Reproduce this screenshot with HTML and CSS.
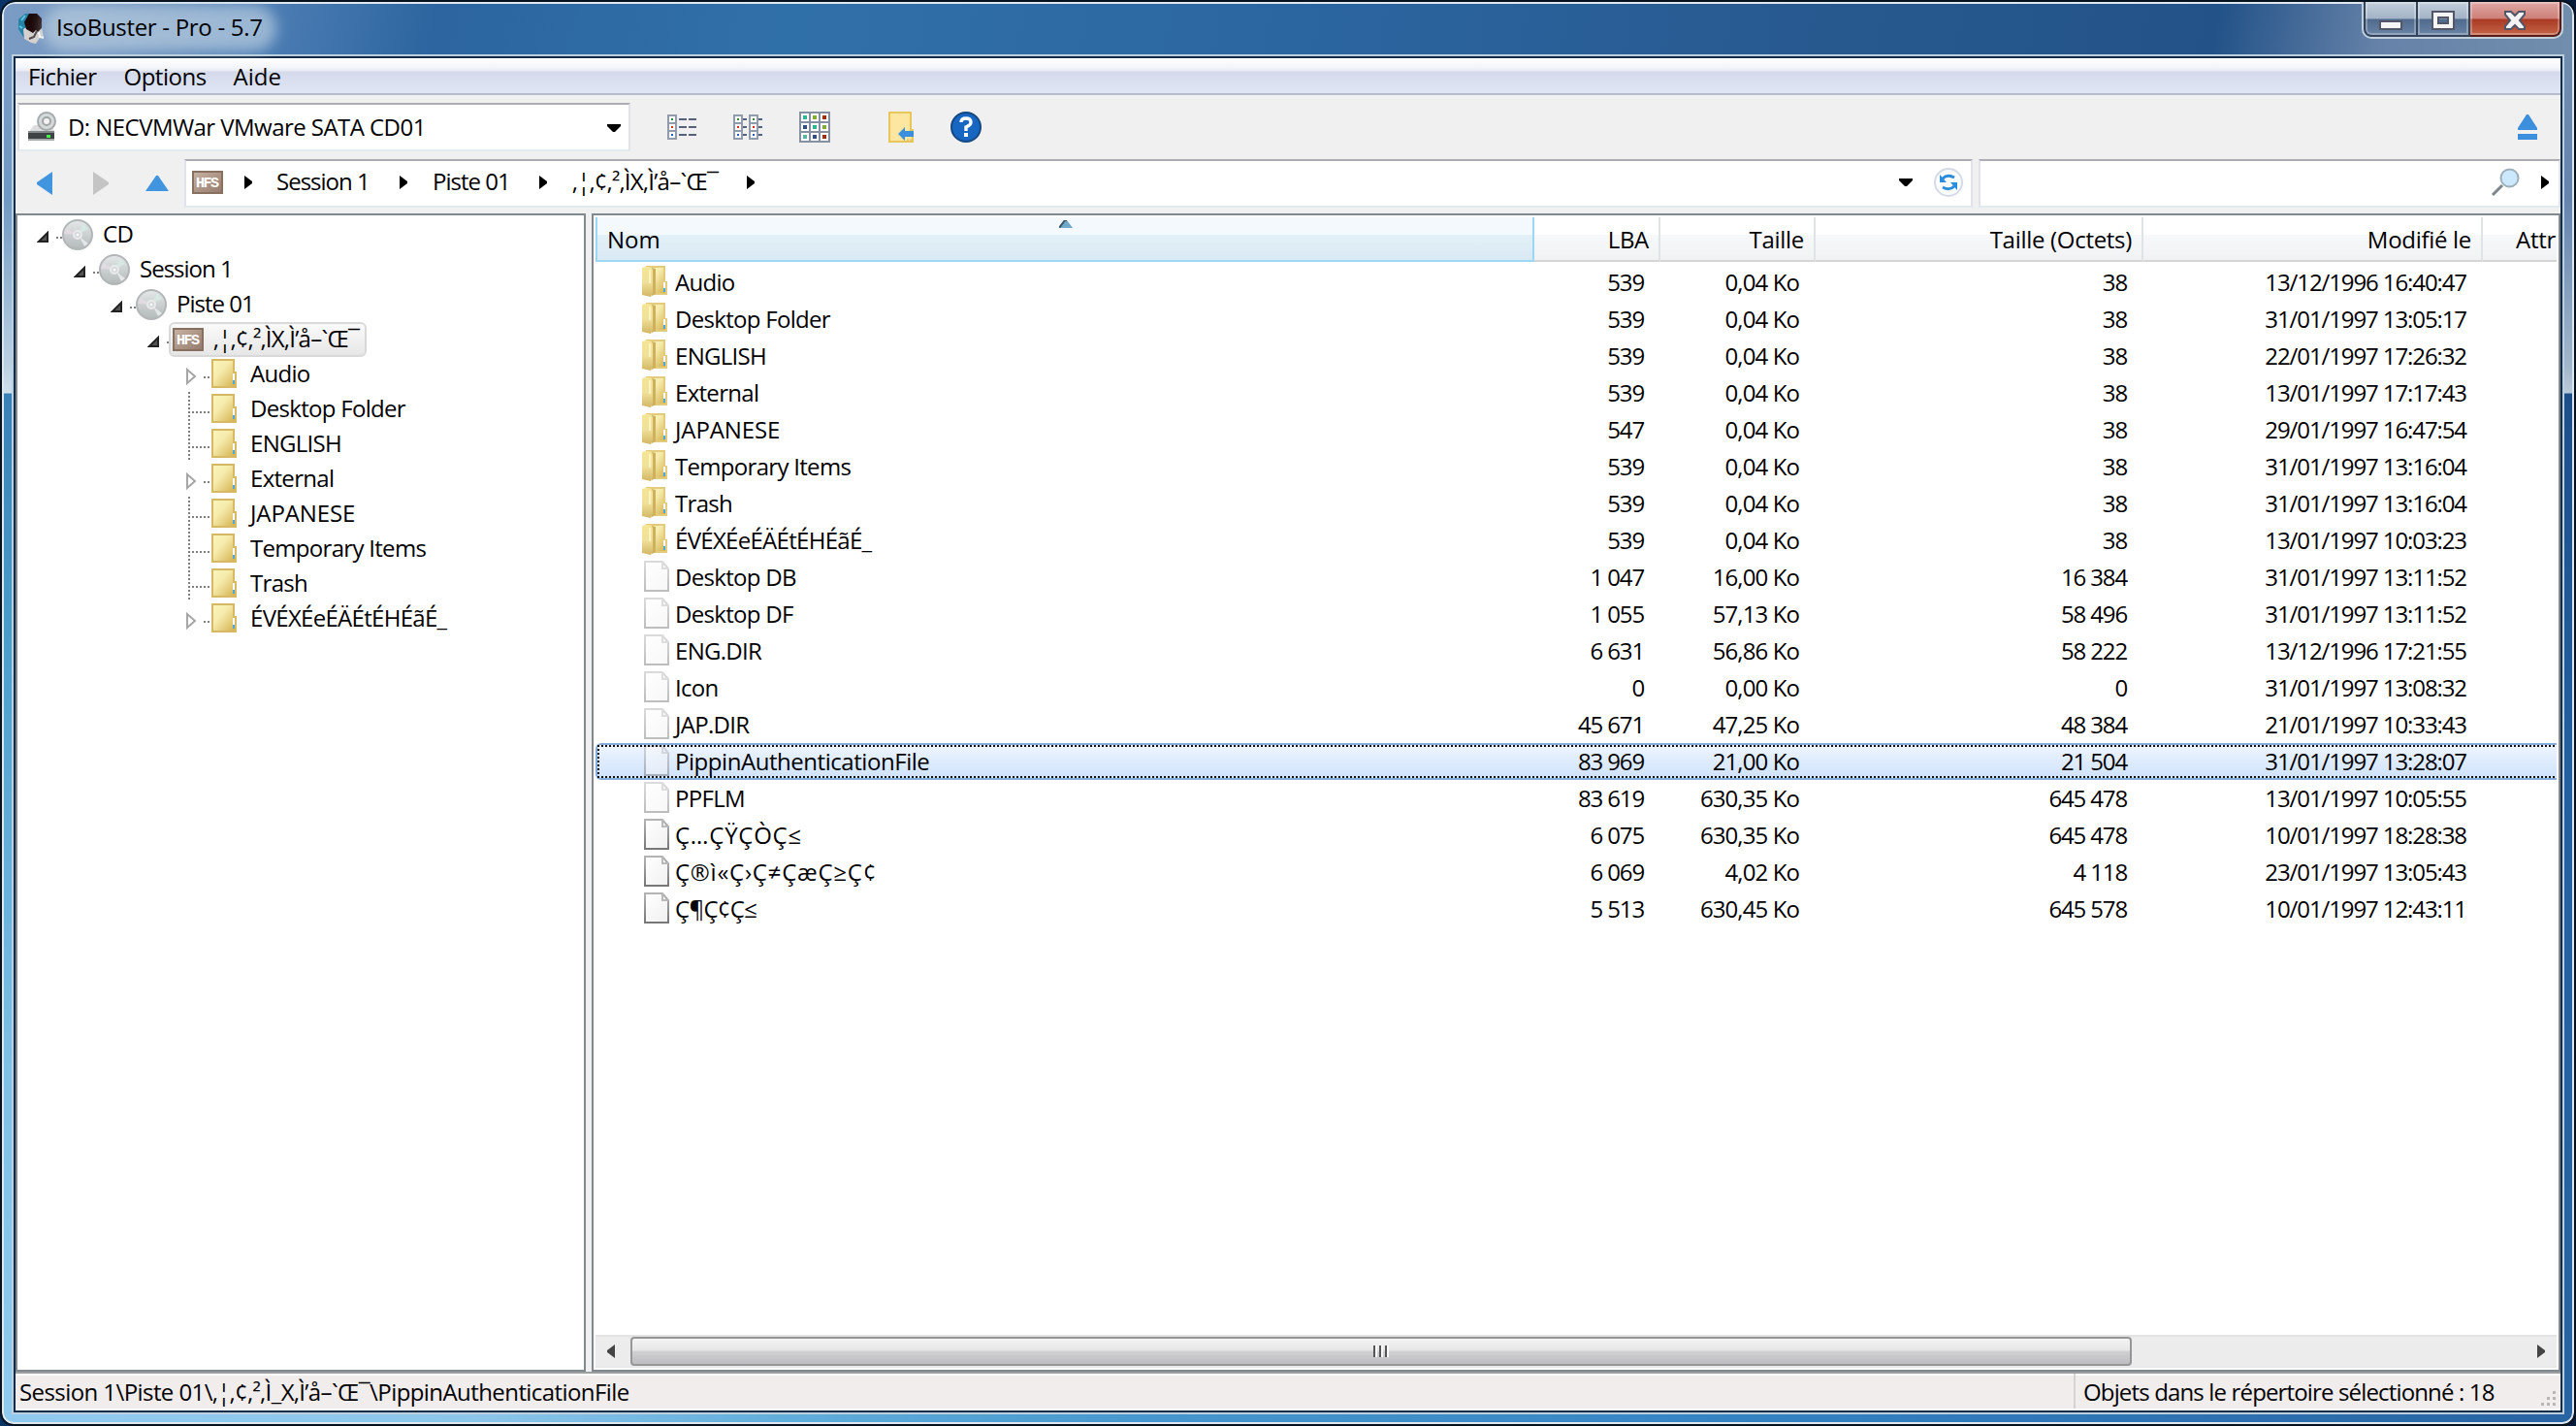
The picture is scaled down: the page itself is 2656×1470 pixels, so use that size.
FILE: index.html
```
<!DOCTYPE html>
<html lang="fr">
<head>
  <meta charset="UTF-8" />
  <title>IsoBuster - Pro - 5.7</title>
  <link rel="stylesheet" href="styles.css">
</head>
<body>
  <!-- shared icons -->
  <svg class="defs" width="0" height="0">
    <defs>
      <linearGradient id="gFolder" x1="0" y1="0" x2="1" y2="1">
        <stop offset="0" stop-color="#fbf5bc" /><stop offset=".4" stop-color="#f6ebac" /><stop offset="1" stop-color="#d2ae4a" />
      </linearGradient>
      <linearGradient id="gFlap" x1="0" y1="0" x2="0" y2="1">
        <stop offset="0" stop-color="#f4e596" /><stop offset=".5" stop-color="#f0e19a" /><stop offset="1" stop-color="#d3b663" />
      </linearGradient>
      <linearGradient id="gDisc" x1="0" y1="0" x2="0" y2="1">
        <stop offset="0" stop-color="#e4e8e8" /><stop offset="1" stop-color="#b3b8b8" />
      </linearGradient>
      <linearGradient id="gPage" x1="0" y1="0" x2="1" y2="1">
        <stop offset="0" stop-color="#ffffff" /><stop offset="1" stop-color="#f0f0f0" />
      </linearGradient>
      <linearGradient id="gEdge" x1="0" y1="0" x2="0" y2="1">
        <stop offset="0" stop-color="#b4b4b4" /><stop offset="1" stop-color="#777" />
      </linearGradient>
      <linearGradient id="gHfs" x1="0" y1="0" x2="1" y2="1">
        <stop offset="0" stop-color="#c8b4a6" /><stop offset="1" stop-color="#93796b" />
      </linearGradient>
      <symbol id="folder" viewBox="0 0 26 30">
        <path d="M1 1h22v13h2v15H1z" fill="url(#gFolder)" stroke="#d6b865" stroke-width="2" />
        <path d="M22 15h2v7h-2z" fill="#fff" /><path d="M22 22h2v4h-2z" fill="#4fa7dc" />
      </symbol>
      <symbol id="folder-open" viewBox="0 0 26 32">
        <path d="M5 1h18v16h2v12H8z" fill="url(#gFolder)" stroke="#e3cb7e" stroke-width="2" />
        <path d="M10 2l4 1v26l-4 2z" fill="#cdb15c" />
        <path d="M0 2q6-2 10 0l1 3v23l-2 4-9-2z" fill="url(#gFlap)" />
        <path d="M7 4h2v14H7z" fill="#fff9d4" opacity=".7" />
        <path d="M22 17h2v6h-2z" fill="#fff" /><path d="M22 23h2v4h-2z" fill="#4fa7dc" />
      </symbol>
      <symbol id="page" viewBox="0 0 26 32">
        <path d="M1 1h18l6 7v23H1z" fill="url(#gPage)" stroke="url(#gEdge)" stroke-width="2" />
        <path d="M19 1v7h6" fill="none" stroke="#b9b9b9" stroke-width="2" />
      </symbol>
      <symbol id="disc" viewBox="0 0 32 32">
        <circle cx="16" cy="16" r="15" fill="url(#gDisc)" stroke="#b2b6b6" stroke-width="2" />
        <path d="M16 16L4 9l-2 6z" fill="#e9dde7" opacity=".7" /><path d="M16 16L22 4l5 6z" fill="#d4ebe2" opacity=".8" />
        <path d="M18 18l9 7-4 3z" fill="#eef0f0" opacity=".8" />
        <circle cx="16" cy="16" r="4" fill="#d3d7d7" stroke="#e9ebeb" stroke-width="2" />
        <circle cx="16" cy="16" r="1.500" fill="#f8f8f8" />
      </symbol>
      <symbol id="hfs" viewBox="0 0 32 24">
        <path d="M1 1h30v22H1z" fill="url(#gHfs)" stroke="#87705f" stroke-width="2" />
        <text x="16" y="17" text-anchor="middle" textLength="24" class="hfs-text">HFS</text>
      </symbol>
      <symbol id="arrow" viewBox="0 0 8 14"><path d="M0 0l8 6v2l-8 6z" /></symbol>
      <symbol id="down" viewBox="0 0 14 8"><path d="M0 0h14v2L8 8H6L0 2z" /></symbol>
    </defs>
  </svg>

  <div class="window">
    <div class="titlebar">
      <svg class="app-icon" width="30" height="34" viewBox="0 0 30 34">
        <path d="M8 1h6l-4 20 2 8-6-4-5-8V7z" fill="#2484a8" />
        <path d="M4 8l4-5M2 14l3 2" stroke="#63c5e0" stroke-width="2" />
        <path d="M6 17l5-3 7 4 7-3 2 10-4 1-4 6-5-1-7-4z" fill="#d6d1d0" />
        <path d="M12 1h8l5 5v10l-4 4-2-2-3 3-7-4-2-7z" fill="#1c0707" />
        <path d="M20 19l-3 6-5 2" stroke="#4d4545" stroke-width="2" fill="none" />
        <path d="M22 20l1 5 4 1" stroke="#fff" stroke-width="2" fill="none" />
      </svg>
      <span class="title">IsoBuster - Pro - 5.7</span>
      <div class="caption-buttons">
        <div class="cap min"><svg width="24" height="10"><path d="M1 1h22v8H1z" fill="#f4f4f4" stroke="#535666" stroke-width="2" /></svg></div>
        <div class="cap max"><svg width="24" height="20"><path d="M1 1h22v18H1zM7 7v6h10V7z" fill="#f4f4f4" fill-rule="evenodd" stroke="#535666" stroke-width="2" /></svg></div>
        <div class="cap close"><svg width="24" height="20"><path d="M2 1h6l4 4 4-4h6v3l-5 6 5 6v3h-6l-4-4-4 4H2v-3l5-6-5-6z" fill="#f4f4f4" stroke="#535666" stroke-width="2" /></svg></div>
      </div>
    </div>

    <div class="client">
      <div class="menubar"><span>Fichier</span><span>Options</span><span class="aide">Aide</span></div>

      <div class="toolbar">
        <div class="box drive">
          <svg width="32" height="32" viewBox="0 0 32 32">
            <path d="M7 14h18l4 8H1z" fill="#dcdcdc" />
            <circle cx="20" cy="10" r="9" fill="#d5d9da" stroke="#a4aaab" stroke-width="2" />
            <circle cx="20" cy="10" r="4" fill="#f3f3f3" stroke="#9fa5a5" stroke-width="2" />
            <path d="M1 20h27v9H1z" fill="#3e4345" /><path d="M1 20h27v2H1z" fill="#83898b" /><path d="M1 28h27v2H1z" fill="#a5a9aa" />
            <path d="M20 24h4v3h-4z" fill="#48f04c" />
          </svg>
          <span class="drive-name">D: NECVMWar VMware SATA CD01</span>
          <svg width="14" height="8"><use href="#down" /></svg>
        </div>
        <svg class="tb-list" width="30" height="26">
          <path d="M1 1h8v24H1zM1 9h8M1 17h8" fill="#fff" stroke="#929bab" stroke-width="2" />
          <path d="M12 5h8m2 0h8M12 13h8m2 0h8M12 21h8m2 0h8" stroke="#56627c" stroke-width="2" />
          <path d="M4 4h2v2H4z" fill="#2f8a3c" /><path d="M4 12h2v2H4z" fill="#d0301c" /><path d="M4 20h2v2H4z" fill="#2460c0" />
        </svg>
        <svg class="tb-small" width="30" height="26">
          <path d="M1 1h8v24H1zM1 9h8M1 17h8M17 1h8v24h-8zM17 9h8M17 17h8" fill="#fff" stroke="#929bab" stroke-width="2" />
          <path d="M10 5h4M10 13h4M10 21h4M26 5h4M26 13h4M26 21h4" stroke="#56627c" stroke-width="2" />
          <path d="M4 4h2v2H4zM20 4h2v2h-2z" fill="#2f8a3c" /><path d="M4 12h2v2H4zM20 12h2v2h-2z" fill="#d0301c" /><path d="M4 20h2v2H4zM20 20h2v2h-2z" fill="#2460c0" />
        </svg>
        <svg class="tb-grid" width="32" height="32">
          <path d="M1 1h30v30H1zM1 11h30M1 21h30M11 1v30M21 1v30" fill="#fff" stroke="#8590a3" stroke-width="2" />
          <path d="M4 4h4v4H4zM14 14h4v4h-4z" fill="#2fb594" /><path d="M14 4h4v4h-4zM24 14h4v4h-4z" fill="#82aa38" />
          <path d="M24 4h4v4h-4zM24 24h4v4h-4z" fill="#99310e" /><path d="M4 14h4v4H4zM14 24h4v4h-4z" fill="#32507e" /><path d="M4 24h4v4H4z" fill="#5cb4a0" />
        </svg>
        <svg class="tb-folder" width="26" height="32">
          <path d="M1 1h22v18h2v12H1z" fill="#fde6a0" stroke="#e9c65c" stroke-width="2" />
          <path d="M10 23l7-7v4h9v6h-9v4z" fill="#3c8fdc" /><path d="M20 28v3M23 28v3" stroke="#d8b44c" />
        </svg>
        <svg class="tb-help" width="32" height="32">
          <circle cx="16" cy="16" r="15" fill="#1766c2" stroke="#164880" stroke-width="2" />
          <path d="M11 11q0-4 5-4t5 4q0 3-5 5v4" fill="none" stroke="#fff" stroke-width="3.4" /><path d="M14 22h4v4h-4z" fill="#fff" />
        </svg>
        <svg class="tb-eject" width="20" height="26"><path d="M9 0h2l9 14v2H0v-2zM0 20h20v6H0z" fill="#3b8fdd" /></svg>
      </div>

      <div class="address-row">
        <svg class="nav-back" width="16" height="24"><path d="M16 0v24L0 13v-2z" fill="#4095de" /></svg>
        <svg class="nav-fwd" width="16" height="24"><path d="M0 0v24l16-11v-2z" fill="#c4c4c4" /></svg>
        <svg class="nav-up" width="24" height="16"><path d="M0 16L11 0h2l11 16z" fill="#4095de" /></svg>
        <div class="box address">
          <svg width="32" height="24"><use href="#hfs" /></svg>
          <svg class="sep1" width="8" height="14"><use href="#arrow" /></svg>
          <span class="crumb c1">Session 1</span>
          <svg width="8" height="14"><use href="#arrow" /></svg>
          <span class="crumb c2">Piste 01</span>
          <svg width="8" height="14"><use href="#arrow" /></svg>
          <span class="crumb c3">‚¦‚¢‚²‚ÌX‚Ì’å–`Œ¯</span>
          <svg width="8" height="14"><use href="#arrow" /></svg>
          <svg class="drop" width="14" height="8"><use href="#down" /></svg>
          <svg class="refresh" width="30" height="30" viewBox="0 0 30 30">
            <circle cx="15" cy="15" r="14" fill="#fbfcfe" stroke="#d3dbe8" stroke-width="2" />
            <path d="M9 11q5-5 12-1M21 19q-5 5-12 1" fill="none" stroke="#2a8ddc" stroke-width="3" />
            <path d="M6 7v8h7zM24 23v-8h-7z" fill="#2a8ddc" />
          </svg>
        </div>
        <div class="box search">
          <svg width="30" height="30" viewBox="0 0 30 30">
            <path d="M2 28L12 18" stroke="#7d868c" stroke-width="3" />
            <circle cx="19.500" cy="10.500" r="9" fill="#cbe8fd" stroke="#9db0ba" stroke-width="2" />
          </svg>
          <svg width="8" height="14"><use href="#arrow" /></svg>
        </div>
      </div>

      <div class="panes">
        <div class="tree" id="tree"></div>
        <div class="list">
          <div class="head">
            <div class="th name">Nom<svg class="sort" width="14" height="8"><path d="M0 8L6 0h2l6 8z" fill="#6fa9ca" /><path d="M0 8L6 0h2" fill="none" stroke="#3a5668" stroke-width="2" /></svg></div>
            <div class="th lba">LBA</div>
            <div class="th size">Taille</div>
            <div class="th bytes">Taille (Octets)</div>
            <div class="th date">Modifié le</div>
            <div class="th attr">Attr</div>
          </div>
          <div class="rows" id="rows"></div>
          <div class="scroll">
            <svg class="sl" width="8" height="14"><path d="M8 0v14L0 8V6z" fill="#444" /></svg>
            <div class="thumb"><i></i><i></i><i></i></div>
            <svg class="sr" width="8" height="14"><path d="M0 0v14l8-6V6z" fill="#444" /></svg>
          </div>
        </div>
      </div>

      <div class="status">
        <span class="path">Session 1\Piste 01\‚¦‚¢‚²‚Ì_X‚Ì’å–`Œ¯\PippinAuthenticationFile</span>
        <span class="count">Objets dans le répertoire sélectionné : 18</span>
        <svg class="grip" width="16" height="18"><path d="M12 0h3v3h-3zM6 6h3v3H6zM12 6h3v3h-3zM0 12h3v3H0zM6 12h3v3H6zM12 12h3v3h-3z" fill="#b9b5b5" /></svg>
      </div>
    </div>
  </div>

  <script>
    // [level, icon, label, expander, class]
    const tree = [
      [0, 'disc', 'CD', 'open', ''],
      [1, 'disc', 'Session 1', 'open', 'tight'],
      [2, 'disc', 'Piste 01', 'open', 'tight'],
      [3, 'hfs', '‚¦‚¢‚²‚ÌX‚Ì’å–`Œ¯', 'open', 'selected'],
      [4, 'folder', 'Audio', 'closed', ''],
      [4, 'folder', 'Desktop Folder', '', ''],
      [4, 'folder', 'ENGLISH', '', ''],
      [4, 'folder', 'External', 'closed', ''],
      [4, 'folder', 'JAPANESE', '', 'wide'],
      [4, 'folder', 'Temporary Items', '', ''],
      [4, 'folder', 'Trash', '', ''],
      [4, 'folder', 'ÉVÉXÉeÉÄÉtÉHÉãÉ_', 'closed', '']
    ];
    const expander = {
      open: '<svg class="exp" width="12" height="12"><path d="M11 2v9H2z" fill="#555" stroke="#222" stroke-width="2"/></svg>',
      closed: '<svg class="exp" width="12" height="18"><path d="M1 2v14l8-7z" fill="#fff" stroke="#a6a6a6" stroke-width="2"/></svg>'
    };
    const sizes = { disc: [32, 32], hfs: [32, 24], folder: [26, 30] };
    document.getElementById('tree').innerHTML = tree.map(([lvl, icon, label, exp, cls]) => {
      const [w, h] = sizes[icon];
      const left = exp ? expander[exp] + '<i class="dots"></i>' : '<i class="branch"></i>';
      return `<div class="node l${lvl} ${cls}">${left}<span class="item"><svg width="${w}" height="${h}"><use href="#${icon}"/></svg><span>${label}</span></span></div>`;
    }).join('');

    // [icon, name, LBA, size, bytes, modified, class]
    const files = [
      ['folder-open', 'Audio', '539', '0,04 Ko', '38', '13/12/1996 16:40:47', ''],
      ['folder-open', 'Desktop Folder', '539', '0,04 Ko', '38', '31/01/1997 13:05:17', ''],
      ['folder-open', 'ENGLISH', '539', '0,04 Ko', '38', '22/01/1997 17:26:32', ''],
      ['folder-open', 'External', '539', '0,04 Ko', '38', '13/01/1997 17:17:43', ''],
      ['folder-open', 'JAPANESE', '547', '0,04 Ko', '38', '29/01/1997 16:47:54', 'wide'],
      ['folder-open', 'Temporary Items', '539', '0,04 Ko', '38', '31/01/1997 13:16:04', ''],
      ['folder-open', 'Trash', '539', '0,04 Ko', '38', '31/01/1997 13:16:04', ''],
      ['folder-open', 'ÉVÉXÉeÉÄÉtÉHÉãÉ_', '539', '0,04 Ko', '38', '13/01/1997 10:03:23', ''],
      ['page', 'Desktop DB', '1 047', '16,00 Ko', '16 384', '31/01/1997 13:11:52', 'ghost'],
      ['page', 'Desktop DF', '1 055', '57,13 Ko', '58 496', '31/01/1997 13:11:52', 'ghost'],
      ['page', 'ENG.DIR', '6 631', '56,86 Ko', '58 222', '13/12/1996 17:21:55', 'ghost'],
      ['page', 'Icon', '0', '0,00 Ko', '0', '31/01/1997 13:08:32', 'ghost'],
      ['page', 'JAP.DIR', '45 671', '47,25 Ko', '48 384', '21/01/1997 10:33:43', 'ghost'],
      ['page', 'PippinAuthenticationFile', '83 969', '21,00 Ko', '21 504', '31/01/1997 13:28:07', 'ghost selected'],
      ['page', 'PPFLM', '83 619', '630,35 Ko', '645 478', '13/01/1997 10:05:55', 'ghost'],
      ['page', 'Ç…ÇŸÇÒÇ≤', '6 075', '630,35 Ko', '645 478', '10/01/1997 18:28:38', 'mojibake'],
      ['page', 'Ç®ì«Ç›Ç≠ÇæÇ≥Ç¢', '6 069', '4,02 Ko', '4 118', '23/01/1997 13:05:43', 'mojibake'],
      ['page', 'Ç¶Ç¢Ç≤', '5 513', '630,45 Ko', '645 578', '10/01/1997 12:43:11', '']
    ];
    document.getElementById('rows').innerHTML = files.map(([icon, name, lba, size, bytes, date, cls]) =>
      `<div class="row ${cls}"><div class="name"><svg class="${icon}" width="26" height="32"><use href="#${icon}"/></svg><span>${name}</span></div>` +
      `<div class="lba">${lba}</div><div class="size">${size}</div><div class="bytes">${bytes}</div><div class="date">${date}</div></div>`
    ).join('');
  </script>
</body>
</html>
```

FILE: styles.css
```
* { box-sizing: border-box; }
body {
  margin: 0;
  padding: 2px;
  width: 2656px;
  height: 1470px;
  overflow: hidden;
  background: linear-gradient(90deg, #0a3468, #061c38);
  font-family: "Open Sans", "Noto Sans", sans-serif;
  font-size: 24px;
  letter-spacing: -0.7px;
  color: #000;
  white-space: nowrap;
}
svg { display: block; flex: none; }
.defs { position: absolute; }
.hfs-text {
  font: bold 15px "Liberation Mono", monospace;
  letter-spacing: 0;
  fill: #fff;
}

/* aero frame */
.window {
  width: 2652px;
  height: 1466px;
  padding: 0 8px 8px;
  border: 2px solid #dfe8f0;
  border-radius: 14px 14px 12px 12px;
  outline: 2px solid #06131f;
  background:
    linear-gradient(90deg, #91caef 0, #8ec6ea 18%, #62aedb 30%, #4596cd 45%, #3380c0 70%, #2863a2 100%) bottom / 100% 10px no-repeat,
    linear-gradient(180deg, #7c9dc6 0, #7098c2 200px, #b9d0e2 370px, #cfdfeb 401px, #3a80b6 402px, #4a9dcb 650px, #7fc0e6 1100px, #91caef 100%) left / 50% 100% no-repeat,
    linear-gradient(180deg, #7390ae 0, #6484ae 200px, #9fb5cb 370px, #b9c9d9 401px, #1e4f8b 402px, #24609f 800px, #2863a2 100%) right / 50% 100% no-repeat;
}
.titlebar {
  display: flex;
  align-items: center;
  height: 52px;
  margin: 0 -8px;
  padding: 0 9px 0 14px;
  border-radius: 10px 10px 0 0;
  background: linear-gradient(100deg, #7b9cc4 0, #7396c2 100px, #4f7fb5 260px, #2c659f 440px, #3070a8 800px, #2b659f 1350px, #27598f 1850px, #225288 2250px, #6682a8 2420px, #7390ae 2652px);
}
.title {
  margin: 0 0 2px 10px;
  height: 20px;
  line-height: 18px;
  letter-spacing: -0.3px;
  background: rgba(186, 206, 224, .7);
  border-radius: 10px;
  box-shadow: 0 0 14px 14px rgba(186, 206, 224, .7);
}
.caption-buttons {
  display: flex;
  align-self: flex-start;
  width: 208px;
  height: 38px;
  margin: -2px 0 0 auto;
  border: 2px solid #c2d0dd;
  border-top: 0;
  border-radius: 0 0 10px 10px;
  overflow: hidden;
}
.cap {
  display: flex;
  align-items: center;
  justify-content: center;
  border: 2px solid #33445b;
  border-top: 0;
  border-left-width: 0;
  background: linear-gradient(180deg, #c2cedb 0, #a3b3c6 17px, #4f6a8c 18px, #6c87a8 36px);
  box-shadow: inset 0 0 0 2px rgba(255, 255, 255, .28);
}
.min { width: 56px; padding-top: 14px; border-left-width: 2px; border-bottom-left-radius: 8px; }
.max { width: 54px; padding-top: 4px; }
.close {
  width: 94px;
  padding-top: 4px;
  border-color: #5a1c18;
  border-bottom-right-radius: 8px;
  background: linear-gradient(180deg, #e0a8a4 0, #cd8078 17px, #a93a25 18px, #c8694a 36px);
}
.client {
  display: flex;
  flex-direction: column;
  width: 2628px;
  height: 1398px;
  margin: 2px 2px 0;
  border: 2px solid #102c48;
  outline: 2px solid #bccfdf;
  background: #f0f0f0;
}
.menubar {
  display: flex;
  height: 38px;
  padding-left: 13px;
  border-bottom: 2px solid #b6bccc;
  line-height: 37px;
  letter-spacing: -0.5px;
  background: linear-gradient(180deg, #fff 0, #f2f4fa 10px, #e8ebf5 13px, #d4dae9 14px, #dfe5f4 36px);
}
.menubar span { margin-right: 28px; }
.menubar .aide { letter-spacing: 0; }

.toolbar {
  display: flex;
  align-items: center;
  height: 66px;
  padding: 2px 24px 2px 2px;
}
.box {
  display: flex;
  align-items: center;
  height: 50px;
  background: #fff;
  border: 2px solid #e2e3ea;
  border-top-color: #abadb3;
  border-bottom-color: #e3e9ef;
}
.drive { width: 632px; padding: 0 8px; }
.drive-name { flex: 1; margin-left: 10px; line-height: 46px; letter-spacing: -.55px; }
.drive > svg:last-child { margin-top: 2px; }
.tb-list { margin-left: 38px; }
.tb-small { margin-left: 38px; }
.tb-grid { margin-left: 38px; }
.tb-folder { margin-left: 60px; }
.tb-help { margin-left: 38px; }
.tb-eject { margin-left: auto; }

.address-row {
  display: flex;
  align-items: center;
  height: 56px;
  padding-bottom: 6px;
}
.nav-back { margin-left: 22px; }
.nav-fwd { margin-left: 42px; }
.nav-up { margin-left: 38px; }
.address { width: 1844px; margin-left: 16px; padding: 0 8px 2px 6px; }
.sep1 { margin-left: 22px; }
.crumb { line-height: 42px; padding-bottom: 3px; letter-spacing: -1px; }
.c1 { margin-left: 25px; width: 127px; }
.c2 { margin-left: 26px; width: 110px; }
.c3 { margin-left: 26px; width: 180px; letter-spacing: -.7px; }
.drop { margin-left: auto; }
.refresh { margin-left: 22px; }
.search {
  justify-content: flex-end;
  gap: 22px;
  flex: 1;
  margin-left: 6px;
  padding: 0 10px 2px 0;
}

.panes { display: flex; gap: 6px; height: 1194px; }
.tree {
  width: 588px;
  padding-top: 2px;
  background: #fff;
  border: 2px solid #828790;
}
.node { display: flex; align-items: center; height: 36px; }
.l0 { padding-left: 20px; }
.l1 { padding-left: 58px; }
.l2 { padding-left: 96px; }
.l3 { padding-left: 134px; }
.l4 { padding-left: 174px; }
.exp { margin-top: 4px; }
.dots {
  width: 6px;
  height: 2px;
  margin: 6px 0 0 8px;
  background: repeating-linear-gradient(90deg, #808080 0 2px, #fff 2px 4px);
}
.l4 .dots { width: 8px; margin-left: 6px; }
/* dotted connector of a leaf */
.branch {
  width: 24px;
  height: 36px;
  margin-left: 2px;
  background:
    repeating-linear-gradient(180deg, #808080 0 2px, #fff 2px 4px) left / 2px 100% no-repeat,
    repeating-linear-gradient(90deg, #808080 0 2px, #fff 2px 4px) left 20px / 22px 2px no-repeat;
}
.item { display: flex; align-items: center; height: 36px; }
.item span { margin-left: 10px; line-height: 32px; padding-bottom: 3px; }
.l4 .item span { margin-left: 14px; }
.l4 .item > svg { margin-bottom: 2px; }
.tight .item { letter-spacing: -1px; }
.wide span { letter-spacing: -.1px; }
.node.selected .item {
  width: 204px;
  margin-left: -6px;
  padding-left: 2px;
  border: 2px solid #d9d9d9;
  border-radius: 6px;
  background: linear-gradient(180deg, #fafafa, #e6e6e6);
}
.node.selected .dots { width: 8px; }

.list {
  display: flex;
  flex-direction: column;
  width: 2030px;
  padding: 2px;
  background: #fff;
  border: 2px solid #828790;
}
.list .head {
  display: flex;
  width: 2022px;
  height: 46px;
  line-height: 45px;
  letter-spacing: -0.3px;
}
.th {
  position: relative;
  flex: none;
  border-right: 2px solid #e0e3e6;
  border-bottom: 2px solid #d5d5d5;
  background: linear-gradient(180deg, #fff 0 18px, #f7f8fa 18px, #f1f2f4 44px);
}
.th.name {
  padding-left: 10px;
  letter-spacing: 0;
  border: 2px solid #9cd7f6;
  border-top: 0;
  background: linear-gradient(180deg, #f3f9fd 0 18px, #e3f0f7 18px, #d8e9f4 44px);
}
.sort { position: absolute; left: 476px; top: 3px; }
.name { width: 968px; }
.lba { width: 130px; text-align: right; }
.size { width: 160px; text-align: right; }
.bytes { width: 338px; text-align: right; }
.date { width: 350px; text-align: right; }
.th.lba, .th.size, .th.bytes, .th.date { padding-right: 10px; }
.th.attr { width: 76px; padding-left: 34px; border-right: 0; }

.rows { flex: 1; padding-top: 2px; }
.row {
  display: flex;
  width: 2022px;
  height: 38px;
  line-height: 38px;
}
.row .name { display: flex; align-items: center; padding-left: 48px; }
.row .name span { margin-left: 8px; }
.row .page { margin: 0 -2px 2px 2px; }
.row .folder-open { margin-bottom: 2px; }
.ghost .page { opacity: .48; }
.row .lba, .row .bytes, .row .date { letter-spacing: -1.15px; padding-right: 17px; }
.row .date { letter-spacing: -1.1px; }
.row .size { letter-spacing: -.9px; padding-right: 17px; }
.mojibake .name { letter-spacing: .75px; }
.row.selected {
  position: relative;
  border: 2px solid #84acdd;
  border-right: 0;
  border-radius: 6px 0 0 6px;
  line-height: 34px;
  background: linear-gradient(180deg, #eef5fe, #cfe2fc);
}
.row.selected .name { width: 966px; padding-left: 46px; letter-spacing: -.45px; }
.row.selected::after {
  content: "";
  position: absolute;
  inset: 0;
  background:
    repeating-linear-gradient(90deg, #111 0 2px, transparent 2px 4px) top / 100% 2px no-repeat,
    repeating-linear-gradient(90deg, #111 0 2px, transparent 2px 4px) bottom / 100% 2px no-repeat,
    repeating-linear-gradient(180deg, #111 0 2px, transparent 2px 4px) left / 2px 100% no-repeat;
}
.scroll {
  display: flex;
  align-items: center;
  height: 34px;
  padding: 0 12px;
  border-top: 2px solid #e3e3e3;
  border-bottom: 2px solid #e8e8e8;
  background: #ececec;
}
.thumb {
  display: flex;
  align-items: center;
  justify-content: center;
  gap: 2px;
  width: 1548px;
  height: 30px;
  margin-left: 16px;
  border: 2px solid #969696;
  border-radius: 4px;
  background: linear-gradient(180deg, #f4f4f4 0, #e6e6e7 12px, #d1d1d3 13px, #bdbdc1 26px);
}
.thumb i {
  width: 4px;
  height: 12px;
  background: linear-gradient(90deg, #555 50%, #fafafa 50%);
}
.sr { margin-left: auto; }

.status {
  display: flex;
  align-items: center;
  height: 40px;
  padding-left: 4px;
  border-top: 2px solid #9b9d9f;
  border-bottom: 2px solid #fff;
  box-shadow: inset 0 2px #fff;
  background: #f0edec;
}
.path { flex: 1; line-height: 34px; padding-top: 2px; letter-spacing: -.58px; }
.count {
  width: 452px;
  padding: 2px 0 0 8px;
  border-left: 2px solid #d5d2d2;
  line-height: 34px;
  letter-spacing: -.85px;
}
.grip { align-self: flex-end; margin-right: 4px; margin-left: 30px; }
```
